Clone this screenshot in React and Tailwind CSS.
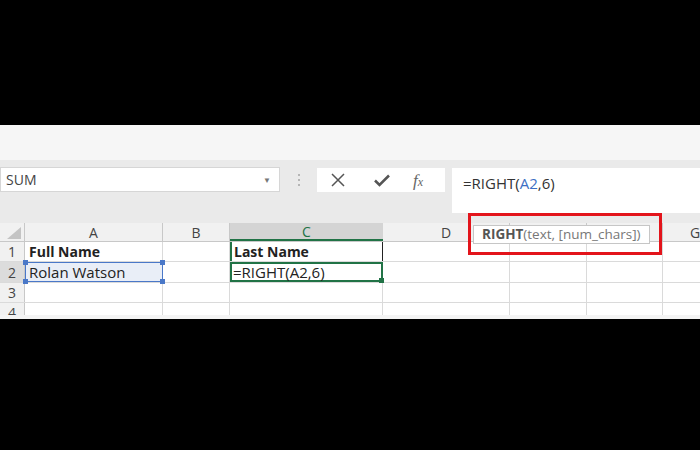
const font = { fontFamily: '"Open Sans", "Noto Sans", sans-serif' };

const widths = ["w-[138px]", "w-[67px]", "w-[153px]", "w-[127px]", "w-[77px]", "w-[76px]"];

function Handle({ pos, color }) {
  return <span className={`absolute w-[5px] h-[5px] ${color} ${pos}`} />;
}

function EmptyCells({ from = 0 }) {
  return (
    <>
      {widths.slice(from).map((w, i) => (
        <div key={i} className={`${w} shrink-0 border-r border-[#dadada]`} />
      ))}
      <div className="flex-1" />
    </>
  );
}

export default function App() {
  return (
    <main className="w-[700px] h-[450px] bg-black overflow-hidden" style={font}>
      <div className="h-[125px]" />
      <div className="relative h-[194px] bg-white flex flex-col overflow-hidden">
        {/* ribbon strip */}
        <div className="h-[35px] bg-[#f6f6f6]" />

        {/* formula bar */}
        <div className="h-[63px] bg-[#eaeaea] flex items-start pt-[7px]">
          <div className="w-[280px] h-[25px] bg-white border border-[#d6d6d6] flex items-center justify-between pl-[5px] pr-[8px]">
            <span className="text-[14px] text-[#444]">SUM</span>
            <span className="text-[8px] text-[#777]">▼</span>
          </div>
          <div className="w-[37px] h-[25px] flex flex-col items-center justify-center gap-[3px]">
            <span className="w-[2px] h-[2px] bg-[#b5b5b5]" />
            <span className="w-[2px] h-[2px] bg-[#b5b5b5]" />
            <span className="w-[2px] h-[2px] bg-[#b5b5b5]" />
          </div>
          <div className="w-[128px] h-[24px] mt-[1px] bg-white flex items-center">
            <svg width="16" height="16" viewBox="0 0 16 16" className="ml-[13px]">
              <path d="M2 2 L14 14 M14 2 L2 14" stroke="#555" strokeWidth="1.5" fill="none" />
            </svg>
            <svg width="18" height="16" viewBox="0 0 18 16" className="ml-[27px]">
              <path d="M2 8.5 L6.5 13 L16 3.5" stroke="#555" strokeWidth="2.5" fill="none" />
            </svg>
            <span
              className="ml-[22px] text-[17px] italic text-[#666] leading-none"
              style={{ fontFamily: '"Liberation Serif", serif' }}
            >
              f<span className="text-[12px]">x</span>
            </span>
          </div>
          <div className="ml-[7px] flex-1 h-[45px] mt-[1px] bg-white pl-[11px] pt-[3px]">
            <span className="text-[15px] text-[#333]">
              =RIGHT(<span className="text-[#3d6fc4]">A2</span>,6)
            </span>
          </div>
        </div>

        {/* grid */}
        <div className="flex-1 flex flex-col text-[15px] text-[#222]">
          {/* column headers */}
          <div className="h-[19px] flex bg-[#f1f1f1] border-b border-[#c8c8c8] text-[#444] text-[14px]">
            <div className="w-[25px] shrink-0 border-r border-[#c8c8c8] relative">
              <svg width="14" height="12" viewBox="0 0 14 12" className="absolute right-[3px] bottom-[2px]">
                <polygon points="14,0 14,12 0,12" fill="#c4c4c4" />
              </svg>
            </div>
            <div className="w-[138px] shrink-0 border-r border-[#c8c8c8] flex items-center justify-center">A</div>
            <div className="w-[67px] shrink-0 border-r border-[#c8c8c8] flex items-center justify-center">B</div>
            <div className="w-[153px] shrink-0 bg-[#d4d4d4] border-b-2 border-[#217346] flex items-center justify-center text-[#217346]">C</div>
            <div className="w-[127px] shrink-0 border-r border-[#c8c8c8] flex items-center justify-center">D</div>
            <div className="w-[77px] shrink-0 border-r border-[#c8c8c8]" />
            <div className="w-[76px] shrink-0 border-r border-[#c8c8c8]" />
            <div className="flex-1 flex items-center justify-end pr-[0px]">
              <span className="w-[10px] overflow-hidden whitespace-nowrap">G</span>
            </div>
          </div>

          {/* row 1 */}
          <div className="h-[20px] flex border-b border-[#dadada]">
            <div className="w-[25px] shrink-0 bg-[#f1f1f1] border-r border-[#c8c8c8] text-[#444] text-[14px] flex items-center justify-center">1</div>
            <div className="w-[138px] shrink-0 border-r border-[#dadada] flex items-center pl-[4px] font-bold text-[14px]">Full Name</div>
            <div className="w-[67px] shrink-0 border-r border-[#dadada]" />
            <div className="w-[153px] shrink-0 border-l-2 border-l-[#217346] border-r border-r-[#222] flex items-center pl-[2px] font-bold text-[14px]">Last Name</div>
            <EmptyCells from={3} />
          </div>

          {/* row 2 */}
          <div className="h-[21px] flex border-b border-[#dadada]">
            <div className="w-[25px] shrink-0 bg-[#dcdcdc] border-r border-[#c8c8c8] text-[#444] text-[14px] flex items-center justify-center">2</div>
            <div className="w-[138px] shrink-0 relative bg-[#e9eef7] border-[1.5px] border-[#4a78c8] flex items-center pl-[3px]">
              Rolan Watson
              <Handle pos="-left-[3px] -top-[3px]" color="bg-[#4a78c8]" />
              <Handle pos="-right-[3px] -top-[3px]" color="bg-[#4a78c8]" />
              <Handle pos="-left-[3px] -bottom-[3px]" color="bg-[#4a78c8]" />
              <Handle pos="-right-[3px] -bottom-[3px]" color="bg-[#4a78c8]" />
            </div>
            <div className="w-[67px] shrink-0 border-r border-[#dadada]" />
            <div className="w-[153px] shrink-0 relative border-2 border-[#217346] flex items-center pl-[1px]">
              =RIGHT(A2,6)
              <Handle pos="-right-[3px] -bottom-[3px]" color="bg-[#217346]" />
            </div>
            <EmptyCells from={3} />
          </div>

          {/* row 3 */}
          <div className="h-[20px] flex border-b border-[#dadada]">
            <div className="w-[25px] shrink-0 bg-[#f1f1f1] border-r border-[#c8c8c8] text-[#444] text-[14px] flex items-center justify-center">3</div>
            <EmptyCells />
          </div>

          {/* row 4 (cut off) */}
          <div className="h-[12px] flex overflow-hidden">
            <div className="w-[25px] shrink-0 bg-[#f1f1f1] border-r border-[#c8c8c8] text-[#444] text-[14px] flex justify-center leading-[20px] h-[20px]">4</div>
            <EmptyCells />
          </div>
          <div className="flex-1 bg-[#f4f4f4]" />
        </div>

        {/* function tooltip with red highlight */}
        <div className="absolute left-[468px] top-[88px] w-[194px] h-[42px] border-[3px] border-[#e3141b] pt-[9px] pl-[2px]">
          <div className="w-[177px] h-[19px] bg-white border border-[#c6c6c6] flex items-center pl-[8px] text-[13.5px] text-[#555] whitespace-nowrap">
            <span className="font-bold">RIGHT</span>
            <span className="text-[#777]">(text, [num_chars])</span>
          </div>
        </div>
      </div>
    </main>
  );
}
